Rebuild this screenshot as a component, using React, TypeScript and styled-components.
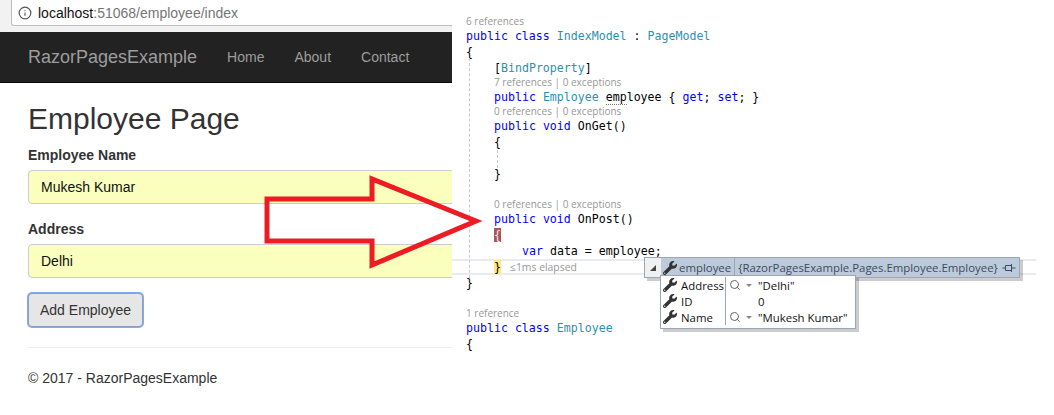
import React from 'react'
import styled, {createGlobalStyle} from 'styled-components'
import {Info, Search} from 'lucide-react'
import {FaWrench} from 'react-icons/fa'

const GlobalStyle = createGlobalStyle`
  html, body {
    margin: 0;
    background: #fff;
  }
  body {
    font-family: "Liberation Sans", Arial, sans-serif;
    font-size: 14px;
    color: #333;
  }
`

const Page = styled.div`
  position: relative;
  display: flex;
  width: 1054px;
  height: 415px;
  overflow: hidden;
`

const Browser = styled.section`
  flex: 0 0 452px;
  overflow: hidden;
`

const AddressBar = styled.div`
  height: 32px;
  padding-left: 11px;
  background: #f2f2f2;
`

const AddressBox = styled.div`
  display: flex;
  align-items: center;
  gap: 6px;
  height: 26px;
  padding-left: 6px;
  box-sizing: border-box;
  background: #fff;
  border: 1px solid #bdbdbd;
  border-top: 0;
  border-right: 0;
  border-bottom-left-radius: 3px;
  font-size: 14px;
  color: #757575;

  svg {
    color: #555;
    flex: none;
  }
  b {
    font-weight: 400;
    color: #111;
  }
`

const Navbar = styled.nav`
  display: flex;
  align-items: center;
  height: 51px;
  padding-left: 28px;
  box-sizing: border-box;
  background: #222;
  border-bottom: 1px solid #080808;
  color: #9d9d9d;
`

const Brand = styled.span`
  font-size: 18px;
  margin-right: 30px;
`

const NavLink = styled.span`
  margin-right: 30px;
`

const Content = styled.main`
  padding-left: 28px;

  h2 {
    margin: 19px 0 10px;
    font-size: 30px;
    line-height: 33px;
    font-weight: 500;
  }
  hr {
    margin: 20px 0 20px;
    border: 0;
    border-top: 1px solid #eee;
  }
  p {
    margin: 0;
    line-height: 20px;
  }
`

const Label = styled.label`
  display: block;
  margin-bottom: 5px;
  font-weight: 700;
  line-height: 20px;
`

const Field = styled.input`
  display: block;
  width: 440px;
  height: 34px;
  margin-bottom: 15px;
  padding: 6px 12px;
  box-sizing: border-box;
  background: #faffbd;
  border: 1px solid #ccc;
  border-radius: 4px;
  font: inherit;
  color: #111;
  outline: 0;
`

const SubmitButton = styled.button`
  display: block;
  height: 34px;
  padding: 0 11px;
  background: #e6e6e6;
  border: 1px solid #8c9fc0;
  border-radius: 4px;
  box-shadow: 0 0 0 1px #82aaf0;
  font: inherit;
  color: #333;
`

const Editor = styled.section`
  position: relative;
  flex: 0 0 584px;
  padding-top: 15px;
  box-sizing: border-box;
  font-family: "DejaVu Sans Mono", monospace;
  font-size: 11.6px;
  color: #000;
`

const CodeRow = styled.div<{$indent?: number; $current?: boolean}>`
  height: 16px;
  line-height: 16px;
  box-sizing: border-box;
  padding-left: ${(p) => 14 + (p.$indent || 0) * 28}px;
  white-space: pre;
  ${(p) => p.$current && `
    border-top: 2px solid #eaeaf2;
    border-bottom: 2px solid #eaeaf2;
    line-height: 12px;
    display: flex;
    align-items: center;
    gap: 9px;
  `}
`

const Lens = styled.div<{$indent?: number}>`
  height: 13px;
  line-height: 13px;
  padding-left: ${(p) => 14 + (p.$indent || 0) * 28}px;
  font-family: "Open Sans", sans-serif;
  font-size: 10px;
  color: #979797;
`

const Elapsed = styled.span`
  font-family: "Open Sans", sans-serif;
  font-size: 10.4px;
  color: #979797;
`

const Kw = styled.span`
  color: #0000ff;
`

const Type = styled.span`
  color: #2b91af;
`

const Squiggle = styled.span`
  border-bottom: 1px dotted #777;
`

const Brace = styled.span<{$bg: string; $color: string}>`
  display: inline-block;
  height: 14px;
  line-height: 14px;
  background: ${(p) => p.$bg};
  color: ${(p) => p.$color};
`

const Guide = styled.div<{$left: number; $top: number; $height: number}>`
  position: absolute;
  left: ${(p) => p.$left}px;
  top: ${(p) => p.$top}px;
  height: ${(p) => p.$height}px;
  border-left: 1px dashed #c8c8c8;
`

const Arrow = styled.svg`
  position: absolute;
  left: 260px;
  top: 170px;
`

const DataTip = styled.div`
  position: absolute;
  left: 192px;
  top: 257px;
  font-family: "Open Sans", sans-serif;
  font-size: 11.4px;
  color: #1e1e1e;
`

const TipHead = styled.div`
  display: flex;
  align-items: stretch;
  width: 376px;
  height: 21px;
  box-sizing: border-box;
  background: #bccadb;
  border: 1px solid #9ba7b7;
  box-shadow: 3px 3px 0 rgba(0, 0, 0, 0.2);
`

const Expander = styled.div`
  flex: none;
  display: flex;
  align-items: center;
  justify-content: center;
  width: 16px;
  background: #f0f0f0;

  &::before {
    content: '';
    border-style: solid;
    border-width: 0 0 6px 6px;
    border-color: transparent transparent #444 transparent;
  }
`

const TipName = styled.div`
  flex: none;
  display: flex;
  align-items: center;
  gap: 2px;
  padding: 0 3px 0 2px;
  color: #3d4b61;
  border-right: 1px solid #9ba7b7;
`

const TipValue = styled.div`
  flex: 1;
  min-width: 0;
  display: flex;
  align-items: center;
  justify-content: space-between;
  padding: 0 3px 0 3px;
  color: #3d4b61;
  white-space: nowrap;

  svg {
    flex: none;
  }
`

const Members = styled.div`
  position: absolute;
  left: 16px;
  top: 18px;
  display: grid;
  grid-template-columns: 65px 129px;
  width: 196px;
  box-sizing: border-box;
  padding: 1px 0 3px;
  background: #fff;
  border: 1px solid #9ba7b7;
  box-shadow: 3px 3px 0 rgba(0, 0, 0, 0.2);
`

const MemberName = styled.div`
  display: flex;
  align-items: center;
  gap: 4px;
  height: 16px;
  padding-left: 2px;
  border-right: 1px solid #9ba7b7;
  color: #111;

  svg {
    color: #333;
    flex: none;
  }
`

const MemberValue = styled.div`
  display: flex;
  align-items: center;
  height: 16px;
  padding-left: 3px;
  color: #111;

  svg {
    color: #666;
    flex: none;
  }
`

const Caret = styled.span`
  width: 0;
  margin: 0 6px 0 5px;
  border-style: solid;
  border-width: 3px 3px 0;
  border-color: #888 transparent transparent;
`

const ValueText = styled.span<{$plain?: boolean}>`
  margin-left: ${(p) => (p.$plain ? 29 : 0)}px;
`

const PinIcon = () => (
  <svg width="14" height="10" viewBox="0 0 14 10" fill="none" stroke="#3d4b61">
    <path d="M0.5 5h3M3.5 2.5h6v5h-6zM9.5 5h4M9.5 1v8" />
  </svg>
)

const members = [
  {name: 'Address', value: '"Delhi"', inspect: true},
  {name: 'ID', value: '0', inspect: false},
  {name: 'Name', value: '"Mukesh Kumar"', inspect: true},
]

export default function App() {
  return (
    <Page>
      <GlobalStyle />
      <Browser>
        <AddressBar>
          <AddressBox>
            <Info size={14} />
            <span><b>localhost</b>:51068/employee/index</span>
          </AddressBox>
        </AddressBar>
        <Navbar>
          <Brand>RazorPagesExample</Brand>
          <NavLink>Home</NavLink>
          <NavLink>About</NavLink>
          <NavLink>Contact</NavLink>
        </Navbar>
        <Content>
          <h2>Employee Page</h2>
          <Label>Employee Name</Label>
          <Field readOnly value="Mukesh Kumar" />
          <Label>Address</Label>
          <Field readOnly value="Delhi" />
          <SubmitButton>Add Employee</SubmitButton>
          <hr />
          <p>© 2017 - RazorPagesExample</p>
        </Content>
      </Browser>

      <Editor>
        <Lens>6 references</Lens>
        <CodeRow><Kw>public</Kw> <Kw>class</Kw> <Type>IndexModel</Type> : <Type>PageModel</Type></CodeRow>
        <CodeRow>{'{'}</CodeRow>
        <CodeRow $indent={1}>[<Type>BindProperty</Type>]</CodeRow>
        <Lens $indent={1}>7 references | 0 exceptions</Lens>
        <CodeRow $indent={1}><Kw>public</Kw> <Type>Employee</Type> <Squiggle>emp</Squiggle>loyee {'{'} <Kw>get</Kw>; <Kw>set</Kw>; {'}'}</CodeRow>
        <Lens $indent={1}>0 references | 0 exceptions</Lens>
        <CodeRow $indent={1}><Kw>public</Kw> <Kw>void</Kw> OnGet()</CodeRow>
        <CodeRow $indent={1}>{'{'}</CodeRow>
        <CodeRow />
        <CodeRow $indent={1}>{'}'}</CodeRow>
        <CodeRow />
        <Lens $indent={1}>0 references | 0 exceptions</Lens>
        <CodeRow $indent={1}><Kw>public</Kw> <Kw>void</Kw> OnPost()</CodeRow>
        <CodeRow $indent={1}><Brace $bg="#a5565f" $color="#f3e3e3">{'{'}</Brace></CodeRow>
        <CodeRow $indent={2}><Kw>var</Kw> data = employee;</CodeRow>
        <CodeRow $indent={1} $current><Brace $bg="#ffe97a" $color="#000">{'}'}</Brace><Elapsed>≤1ms elapsed</Elapsed></CodeRow>
        <CodeRow>{'}'}</CodeRow>
        <CodeRow />
        <Lens>1 reference</Lens>
        <CodeRow><Kw>public</Kw> <Kw>class</Kw> <Type>Employee</Type></CodeRow>
        <CodeRow>{'{'}</CodeRow>

        <Guide $left={17} $top={58} $height={220} />
        <Guide $left={45} $top={150} $height={18} />

        <DataTip>
          <TipHead>
            <Expander />
            <TipName><FaWrench size={14} color="#333" />employee</TipName>
            <TipValue>{'{RazorPagesExample.Pages.Employee.Employee}'}<PinIcon /></TipValue>
          </TipHead>
          <Members>
            {members.map((m) => (
              <React.Fragment key={m.name}>
                <MemberName><FaWrench size={14} />{m.name}</MemberName>
                <MemberValue>
                  {m.inspect && <Search size={12} />}
                  {m.inspect && <Caret />}
                  <ValueText $plain={!m.inspect}>{m.value}</ValueText>
                </MemberValue>
              </React.Fragment>
            ))}
          </Members>
        </DataTip>
      </Editor>

      <Arrow width="224" height="104" viewBox="0 0 224 104" fill="none">
        <path d="M7 29H112V9L216 51L112 95V71H7Z" stroke="#ed1c24" strokeWidth="5" />
      </Arrow>
    </Page>
  )
}
